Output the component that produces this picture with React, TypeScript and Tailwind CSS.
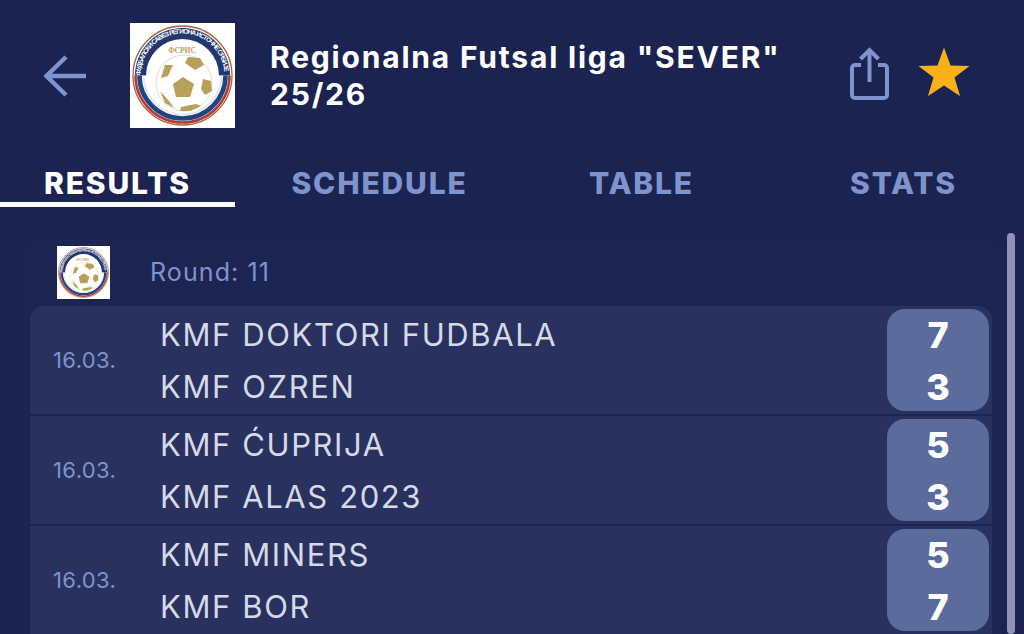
import React from 'react';

const matches = [
  { date: '16.03.', home: 'KMF DOKTORI FUDBALA', away: 'KMF OZREN', homeScore: 7, awayScore: 3 },
  { date: '16.03.', home: 'KMF ĆUPRIJA', away: 'KMF ALAS 2023', homeScore: 5, awayScore: 3 },
  { date: '16.03.', home: 'KMF MINERS', away: 'KMF BOR', homeScore: 5, awayScore: 7 },
];

const tabs = ['RESULTS', 'SCHEDULE', 'TABLE', 'STATS'];

const gold = '#b89f5a';

const LeagueLogo: React.FC<{ id: string; className: string }> = ({ id, className }) => (
  <div className={`bg-white shrink-0 ${className}`}>
    <svg viewBox="0 0 105 105" className="w-full h-full block">
      <defs>
        <path id={id} d="M 10.5 52.5 A 42 42 0 0 1 94.5 52.5" fill="none" />
      </defs>
      <circle cx="52.5" cy="52.5" r="49.5" fill="#fff" stroke="#a8603f" strokeWidth="1.3" />
      <path d="M 5 52.5 A 47.5 47.5 0 0 1 100 52.5 L 89 52.5 A 36.5 36.5 0 0 0 16 52.5 Z" fill="#23376f" />
      <path d="M 5.5 52.5 A 47 47 0 0 0 99.5 52.5" fill="none" stroke="#b23a34" strokeWidth="2.6" />
      <path d="M 9.5 52.5 A 43 43 0 0 0 95.5 52.5" fill="none" stroke="#1f4682" strokeWidth="4.6" />
      <path d="M 13.5 52.5 A 39 39 0 0 0 91.5 52.5" fill="none" stroke="#e6e8ee" strokeWidth="2" />
      <text fontSize="6.6" fontWeight="700" fill="#fff" fontFamily="'Liberation Sans', sans-serif" textLength="128">
        <textPath href={`#${id}`}>ФУДБАЛСКИ САВЕЗ РЕГИОНА ИСТОЧНЕ СРБИЈЕ</textPath>
      </text>
      <text x="52" y="30" textAnchor="middle" fontSize="7.5" fontWeight="700" fill={gold} fontFamily="'Liberation Serif', serif">
        ФСРИС
      </text>
      <circle cx="54" cy="60" r="28" fill="#fff" stroke="#d8d3c0" strokeWidth="0.8" />
      <polygon points="53,54 64,61 60,74 46,74 43,61" fill={gold} />
      <polygon points="58,34 70,35 74,42 65,47 55,40" fill={gold} />
      <polygon points="35,42 43,42 38,53 31,55" fill={gold} />
      <polygon points="73,56 81,58 82,68 75,72 71,66" fill={gold} />
      <polygon points="51,84 66,81 71,83 60,88 50,88" fill={gold} />
      <polygon points="30,68 39,78 44,85 35,80" fill={gold} />
    </svg>
  </div>
);

const App: React.FC = () => {
  return (
    <div className="relative w-[1024px] h-[634px] overflow-hidden bg-[#1b2350] font-['Inter',sans-serif] text-white">
      <header className="flex items-start h-[160px] pt-[23px] pl-[44px] pr-[54px]">
        <svg width="42" height="42" viewBox="0 0 42 42" className="mt-[32px] shrink-0" fill="none" stroke="#7f93cc" strokeWidth="4.5">
          <path d="M42 21H3M22 2 2.5 21 22 40" />
        </svg>
        <LeagueLogo id="ring-large" className="w-[105px] h-[105px] ml-[44px]" />
        <h1 className="ml-[35px] mt-[16px] w-[530px] text-[30px] leading-[37px] font-bold tracking-[1.8px]">
          Regionalna Futsal liga "SEVER" 25/26
        </h1>
        <svg width="40" height="53" viewBox="0 0 40 53" className="ml-auto mt-[24px] shrink-0" fill="none" stroke="#7f93cc" strokeWidth="4">
          <path d="M11 18H5a3 3 0 0 0-3 3v27a3 3 0 0 0 3 3h29a3 3 0 0 0 3-3V21a3 3 0 0 0-3-3h-6" />
          <path d="M19.5 35V3" />
          <path d="M10.5 12l9-9 9 9" />
        </svg>
        <svg width="52" height="50" viewBox="0 0 52 50" className="ml-[28px] mt-[24px] shrink-0">
          <polygon points="26,0.5 32.5,18.5 51.5,19 36.5,30.5 42,49 26,38.5 10,49 15.5,30.5 0.5,19 19.5,18.5" fill="#fbb116" />
        </svg>
      </header>

      <nav className="grid grid-cols-4 gap-x-[27px] w-[1021px]">
        {tabs.map((tab, index) => (
          <div
            key={tab}
            className={`h-[47px] pt-[3px] text-center text-[30px] leading-[40px] font-extrabold tracking-[1.8px] border-b-[5px] ${
              index === 0 ? 'text-white border-white' : 'text-[#7f93cc] border-transparent'
            }`}
          >
            {tab}
          </div>
        ))}
      </nav>

      <main className="mt-[31px] ml-[20px] w-[983px] rounded-t-[14px] bg-[#1c2452]">
        <div className="flex items-center h-[68px] pl-[37px]">
          <LeagueLogo id="ring-small" className="w-[53px] h-[53px]" />
          <span className="ml-[40px] text-[25px] leading-[32px] tracking-[1.1px] text-[#7f93cc]">Round: 11</span>
        </div>
        <div className="flex flex-col gap-y-[2px] ml-[10px] w-[962px]">
          {matches.map((match, index) => (
            <div
              key={match.home}
              className={`flex items-stretch h-[108px] p-[3px] bg-[#29325f] ${index === 0 ? 'rounded-t-[14px]' : ''}`}
            >
              <div className="w-[127px] pl-[20px] self-center text-[22px] leading-[28px] text-[#7f93cc] tracking-[0.4px]">
                {match.date}
              </div>
              <div className="flex-1 text-[31px] leading-[52px] text-[#d5d9e8] tracking-[1.6px]">
                <div>{match.home}</div>
                <div>{match.away}</div>
              </div>
              <div className="w-[102px] rounded-[18px] bg-[#5a6b9c] text-center text-[36px] leading-[52px] font-extrabold text-white">
                <div>{match.homeScore}</div>
                <div>{match.awayScore}</div>
              </div>
            </div>
          ))}
        </div>
      </main>

      <div className="absolute left-[1007px] top-[233px] w-[8px] h-[401px] rounded-full bg-[#8f93b3]" />
    </div>
  );
};

export default App;
